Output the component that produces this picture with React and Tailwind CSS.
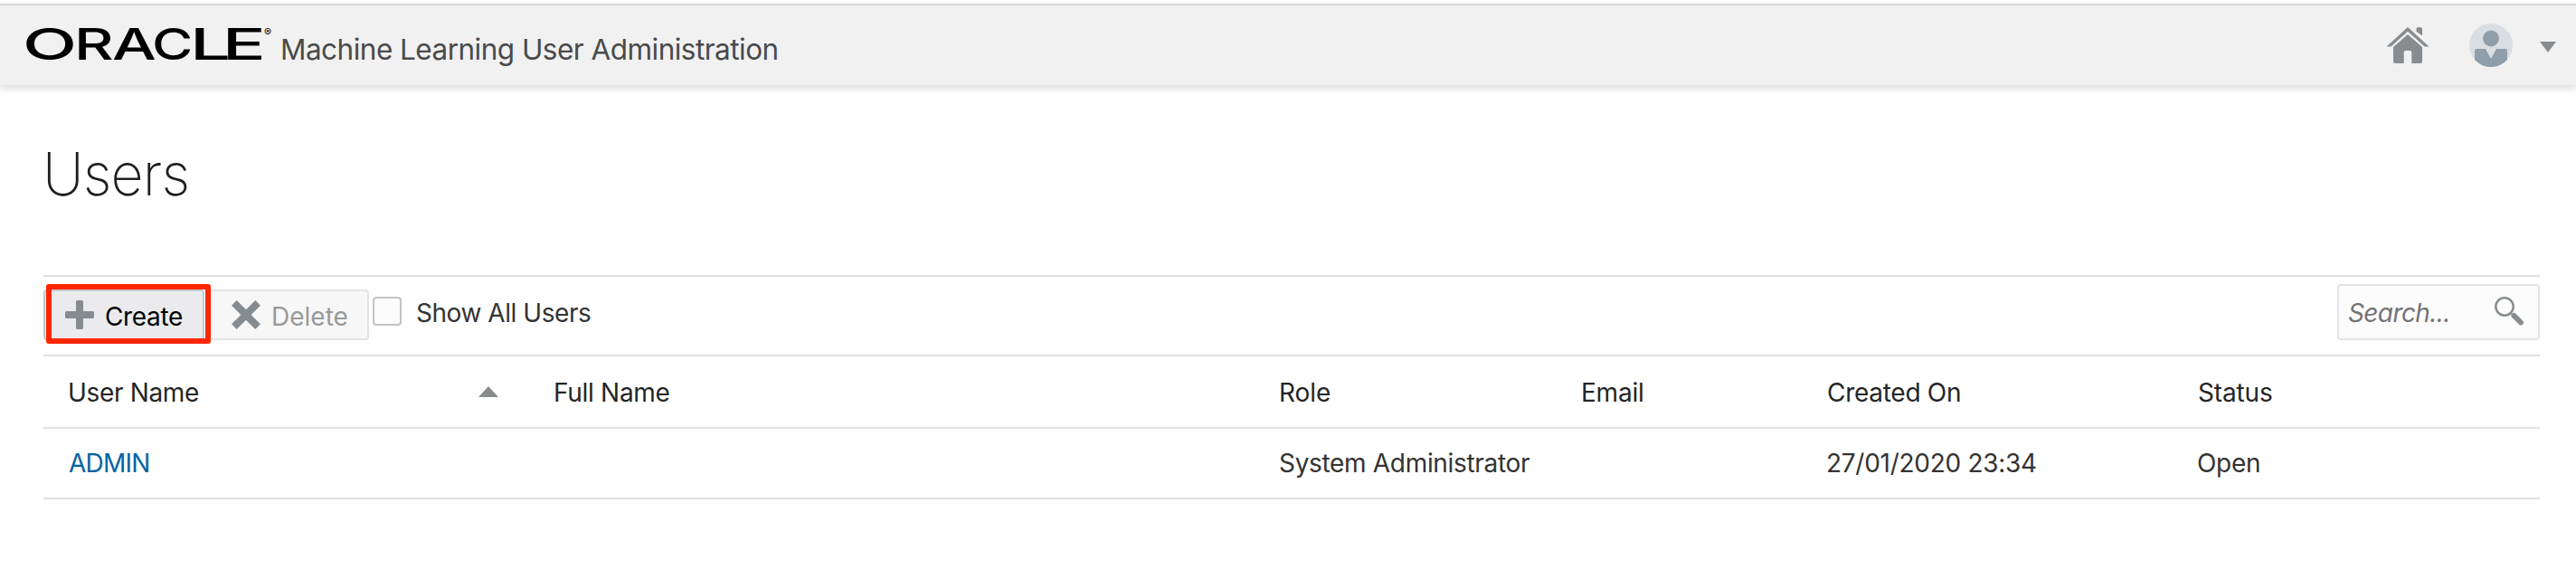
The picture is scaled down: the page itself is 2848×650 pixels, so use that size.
import React from "react";

const GRID =
  "grid grid-cols-[536px_802px_334px_272px_410px_1fr] items-center pl-[27px]";

function OracleLogo() {
  return (
    <div
      className="relative flex h-[88px] w-[281px] shrink-0 text-[47.5px] leading-[86px] font-medium text-black"
      aria-label="ORACLE"
    >
      <span className="-ml-[1px] w-[57px] origin-left scale-x-[1.65]">O</span>
      <span className="w-[42px] origin-left scale-x-[1.42]">R</span>
      <span className="w-[44px] origin-left scale-x-[1.45]">A</span>
      <span className="w-[42px] origin-left scale-x-[1.3]">C</span>
      <span className="w-[48px] origin-left scale-x-[1.68] tracking-[-5.6px]">LE</span>
      <span className="absolute left-[266px] top-[24px] text-[12px] leading-[12px] font-normal">®</span>
    </div>
  );
}

function HomeIcon() {
  return (
    <svg width="48" height="42" viewBox="0 0 48 42" fill="#888c8e">
      <path d="M0.5 22.5 L24 1 L47.5 22.5 H42.5 L24 5.8 L5.5 22.5 Z" />
      <path d="M33.5 2.5 Q33.5 1 36.5 1 Q40 1 40 3 V10.5 L33.5 5.8 Z" />
      <path d="M24 9 L40 23 V39 Q40 41 38 41 H28.3 V29 Q28.3 27 26.3 27 H21.7 Q19.7 27 19.7 29 V41 H10 Q8 41 8 39 V23 Z" />
    </svg>
  );
}

function Avatar() {
  return (
    <svg width="48" height="48" viewBox="0 0 48 48">
      <circle cx="24" cy="24" r="24" fill="#dadee3" />
      <circle cx="24" cy="16.5" r="9" fill="#8f9eaa" />
      <path
        d="M6 30 Q6 28 8 28 H18 L24 39 L30 28 H40 Q42 28 42 30 V40 A24 24 0 0 1 6 40 Z"
        fill="#8f9eaa"
      />
    </svg>
  );
}

export default function App() {
  return (
    <div className="h-[650px] w-full overflow-hidden bg-white pt-1 font-['Inter',sans-serif] text-[28px] whitespace-nowrap text-[#333]">
      <header className="flex h-[90px] justify-between border-t-2 border-[#d7d8dc] bg-[#f1f1f1] pr-[22px] pl-[26px] shadow-[0_4px_8px_rgba(0,0,0,0.14)]">
        <div className="flex">
          <OracleLogo />
          <div className="pl-[3px] text-[31.5px] leading-[97px] tracking-[-0.52px] text-[#4a4a4a]">
            Machine Learning User Administration
          </div>
        </div>
        <div className="flex h-[88px] items-center">
          <div className="mr-[44px]">
            <HomeIcon />
          </div>
          <Avatar />
          <svg className="mt-4 mb-1.5 ml-[30px] -translate-y-[3px]" width="18" height="12" viewBox="0 0 18 12" fill="#888c8e">
            <path d="M0 0H18L9 12Z" />
          </svg>
        </div>
      </header>

      <main className="px-[48px] pr-[40px]">
        <h1 className="-ml-[1px] h-[210px] origin-left scale-x-[0.95] text-[66px] leading-[196px] font-extralight tracking-[-0.9px] text-[#1f1f1f]">
          Users
        </h1>

        <div className="flex h-[90px] justify-between border-y-2 border-[#e0e0e0]">
          <div className="flex">
            <div className="relative mt-[14px] h-[56px] w-[178px]">
              <button className="flex h-full w-full items-center rounded border-2 border-[#c5c9ca] bg-[#ebebed] pl-[22px] text-black">
                <svg width="32" height="32" viewBox="0 0 32 32" fill="#858c90">
                  <path d="M13.5 0H18.5Q20 0 20 1.5V12H30.5Q32 12 32 13.5V18.5Q32 20 30.5 20H20V30.5Q20 32 18.5 32H13.5Q12 32 12 30.5V20H1.5Q0 20 0 18.5V13.5Q0 12 1.5 12H12V1.5Q12 0 13.5 0Z" />
                </svg>
                <span className="pt-[4px] pl-[12px] tracking-[-0.35px]">Create</span>
              </button>
              <div className="absolute -top-[6px] left-[3px] h-[66px] w-[182px] rounded-[3px] border-6 border-[#ff2600]" />
            </div>
            <button className="mt-[14px] ml-[4px] flex h-[56px] w-[178px] items-center rounded border-2 border-[#e4e4e4] bg-[#f7f7f7] pl-[24px] text-[#999]">
              <svg width="32" height="32" viewBox="0 0 32 32" stroke="#858c90" strokeWidth="8" strokeLinecap="square" strokeLinejoin="round">
                <path d="M5.7 5.7L26.3 26.3M26.3 5.7L5.7 26.3" />
              </svg>
              <span className="pt-[4px] pl-[12px] tracking-[0px]">Delete</span>
            </button>
            <label className="flex h-[80px] items-center">
              <span className="mt-[-4px] ml-[4px] h-[32px] w-[32px] rounded border-2 border-[#c4c4c4] bg-[#fcfcfc]" />
              <span className="ml-[16px] tracking-[-0.45px]">Show All Users</span>
            </label>
          </div>
          <div className="mt-[8px] flex h-[62px] w-[224px] items-center justify-between rounded border-2 border-[#e4e4e4] bg-[#fcfcfc] pr-[16px] pl-[10px]">
            <span className="pt-[2px] tracking-[-0.6px] text-[#737373] italic">Search...</span>
            <svg className="mb-[2px]" width="32" height="32" viewBox="0 0 32 32" fill="none" stroke="#888c8e">
              <circle cx="11" cy="11" r="9.7" strokeWidth="2.5" />
              <path d="M21.5 21L29 28.5" strokeWidth="6" strokeLinecap="round" />
              <path d="M18 20L20 18L24 20L20 24Z" fill="#888c8e" stroke="none" />
            </svg>
          </div>
        </div>

        <div className={GRID + " h-[80px] border-b-2 border-[#e2e2e2] pt-[2px] text-[#252525]"}>
          <div className="flex items-center justify-between pr-[60px] tracking-[-0.34px]">
            User Name
            <svg className="mb-[3px]" width="22" height="12" viewBox="0 0 22 12" fill="#888c8e">
              <path d="M0 12H22L11 0Z" />
            </svg>
          </div>
          <span className="pl-[1px] tracking-[-0.3px]">Full Name</span>
          <span className="pl-[1px] tracking-[-0.06px]">Role</span>
          <span className="pl-[1px] tracking-[-0.22px]">Email</span>
          <span className="pl-[1px] tracking-[-0.28px]">Created On</span>
          <span className="pl-[1px] tracking-[-0.14px]">Status</span>
        </div>
        <div className={GRID + " h-[78px] border-b-2 border-[#e0e0e0]"}>
          <a className="pl-[1px] tracking-[-0.75px] text-[#0464a3]">ADMIN</a>
          <span />
          <span className="pl-[1px] tracking-[-0.32px]">System Administrator</span>
          <span />
          <span className="tracking-[-0.28px]">27/01/2020 23:34</span>
          <span className="tracking-[-0.29px]">Open</span>
        </div>
      </main>
    </div>
  );
}
